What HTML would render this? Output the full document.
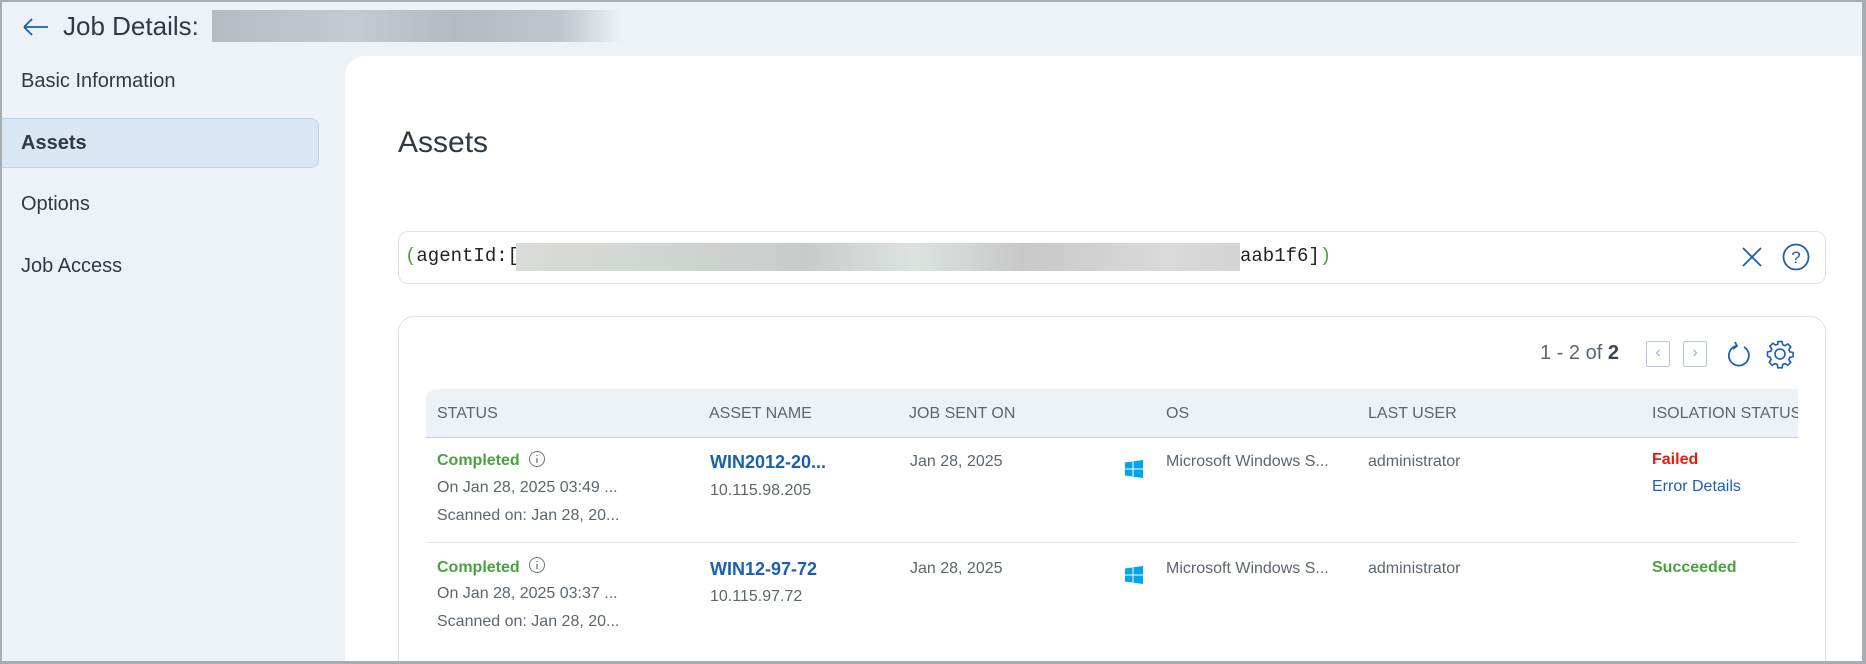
<!DOCTYPE html>
<html style="overflow:hidden;width:1866px;height:664px"><head><meta charset="utf-8"><style>
*{box-sizing:border-box;margin:0;padding:0}
body{width:1866px;height:664px;overflow:hidden;font-family:"Liberation Sans",sans-serif;background:#edf2f9;position:relative;color:#3a4550}
.frame{position:absolute;left:0;top:0;width:1866px;height:664px;border:2px solid #a9acb0;border-right-width:4px;border-bottom-width:3px;pointer-events:none;z-index:10}
.a{position:absolute;white-space:nowrap}
.nav{font-size:20px;color:#2f3a45;left:21px}
.panel{position:absolute;left:345px;top:56px;width:1521px;height:608px;background:#fff;border-top-left-radius:20px}
.th{font-size:16px;color:#5b6670;top:405px}
.g{color:#4aa23e;font-weight:bold;font-size:16px}
.s{font-size:16px;color:#5b6670}
.lnk{color:#1a5fb4;font-weight:bold;font-size:18px}
</style></head><body>
<div class="frame"></div>
<svg class="a" style="left:22px;top:17px" width="28" height="20" viewBox="0 0 28 20"><path d="M2 10H26M2 10L10 2M2 10L10 18" stroke="#1a5fb4" stroke-width="1.8" fill="none"/></svg>
<div class="a" style="left:63px;top:11px;font-size:26px;color:#2f3a45">Job Details:</div>
<div class="a" style="left:212px;top:10px;width:410px;height:32px;background:linear-gradient(90deg,#b5bcc4,#c4cad1 35%,#b3bac2 60%,#c0c6cd 85%,#edf2f9)"></div>
<div class="a nav" style="top:70px">Basic Information</div>
<div class="a" style="left:2px;top:118px;width:317px;height:50px;background:#dae6f3;border:1px solid #bcd2ea;border-left:none;border-radius:0 8px 8px 0"></div>
<div class="a nav" style="top:132px;font-weight:bold">Assets</div>
<div class="a nav" style="top:193px">Options</div>
<div class="a nav" style="top:255px">Job Access</div>
<div class="panel"></div>
<div class="a" style="left:398px;top:126px;font-size:30px;color:#2f3a45">Assets</div>
<div class="a" style="left:398px;top:231px;width:1428px;height:53px;border:1px solid #dde2e8;border-radius:10px"></div>
<div class="a" style="left:405px;top:245px;font-family:'Liberation Mono',monospace;font-size:19px;color:#222"><span style="color:#4aa23e">(</span>agentId:[</div>
<div class="a" style="left:516px;top:243px;width:724px;height:28px;background:linear-gradient(90deg,#d9dcd9,#cfd6d1 20%,#c9cbcb 40%,#dce3df 55%,#c8c8c8 70%,#dadada 90%,#d3d3d3)"></div>
<div class="a" style="left:1240px;top:245px;font-family:'Liberation Mono',monospace;font-size:19px;color:#222">aab1f6]<span style="color:#4aa23e">)</span></div>
<svg class="a" style="left:1740px;top:245px" width="24" height="24"><path d="M3 3L21 21M21 3L3 21" stroke="#1a5fb4" stroke-width="1.8"/></svg>
<svg class="a" style="left:1781px;top:242px" width="30" height="30"><circle cx="15" cy="15" r="12.5" stroke="#1a5fb4" stroke-width="1.8" fill="none"/><text x="15" y="21" text-anchor="middle" font-size="17" fill="#1a5fb4" font-family="Liberation Sans">?</text></svg>
<div class="a" style="left:398px;top:316px;width:1428px;height:360px;border:1px solid #dde2e8;border-radius:16px"></div>
<div class="a" style="left:1540px;top:342px;font-size:20px;color:#5b6670">1 - 2 of <b style="color:#3a4550">2</b></div>
<div class="a" style="left:1646px;top:341px;width:24px;height:26px;border:1.5px solid #b8c8da;border-radius:2px;color:#9ab0c8;font-size:16px;text-align:center;line-height:22px">&lsaquo;</div>
<div class="a" style="left:1683px;top:341px;width:24px;height:26px;border:1.5px solid #b8c8da;border-radius:2px;color:#9ab0c8;font-size:16px;text-align:center;line-height:22px">&rsaquo;</div>
<svg class="a" style="left:1725px;top:340px" width="28" height="30"><path d="M19 7A10 10 0 1 1 11 6" stroke="#1a5fb4" stroke-width="1.8" fill="none"/><path d="M10 2L12 6L8 9" stroke="#1a5fb4" stroke-width="1.8" fill="none"/></svg>
<svg class="a" style="left:1765px;top:339px" width="30" height="30" viewBox="0 0 24 24"><path d="M12 8a4 4 0 1 0 0 8a4 4 0 1 0 0-8z M10.3 2h3.4l.5 2.6 1.8.8 2.2-1.5 2.4 2.4-1.5 2.2.8 1.8 2.6.5v3.4l-2.6.5-.8 1.8 1.5 2.2-2.4 2.4-2.2-1.5-1.8.8-.5 2.6h-3.4l-.5-2.6-1.8-.8-2.2 1.5-2.4-2.4 1.5-2.2-.8-1.8L2 13.7v-3.4l2.6-.5.8-1.8-1.5-2.2 2.4-2.4 2.2 1.5 1.8-.8z" stroke="#1a5fb4" stroke-width="1.3" fill="none"/></svg>
<div class="a" style="left:426px;top:389px;width:1372px;height:49px;background:#edf2f9;border-bottom:1.5px solid #bcd2ea;border-top-left-radius:10px"></div>
<div class="a th" style="left:437px">STATUS</div>
<div class="a th" style="left:709px">ASSET NAME</div>
<div class="a th" style="left:909px">JOB SENT ON</div>
<div class="a th" style="left:1166px">OS</div>
<div class="a th" style="left:1368px">LAST USER</div>
<div class="a th" style="left:1652px;width:146px;overflow:hidden">ISOLATION STATUS</div>
<div class="a" style="left:426px;top:542px;width:1372px;height:1px;background:#e3e7ec"></div>

<div class="a g" style="left:437px;top:452px">Completed</div>
<svg class="a" style="left:528px;top:450px" width="18" height="18"><circle cx="9" cy="9" r="7.5" stroke="#6b7580" stroke-width="1" fill="none"/><path d="M9 8v5M9 5v1" stroke="#6b7580" stroke-width="1.3"/></svg>
<div class="a s" style="left:437px;top:479px">On Jan 28, 2025 03:49 ...</div>
<div class="a s" style="left:437px;top:507px">Scanned on: Jan 28, 20...</div>
<div class="a lnk" style="left:710px;top:452px">WIN2012-20...</div>
<div class="a s" style="left:710px;top:482px">10.115.98.205</div>
<div class="a s" style="left:910px;top:453px">Jan 28, 2025</div>
<svg class="a" style="left:1125px;top:460px" width="18" height="18"><path d="M0 2.5L7.5 1.5V8.5H0zM8.5 1.3L18 0V8.5H8.5zM0 9.5H7.5V16.5L0 15.5zM8.5 9.5H18V18L8.5 16.7z" fill="#00a4ef"/></svg>
<div class="a s" style="left:1166px;top:453px">Microsoft Windows S...</div>
<div class="a s" style="left:1368px;top:453px">administrator</div>
<div class="a" style="left:1652px;top:451px;color:#e0200f;font-weight:bold;font-size:16px">Failed</div>
<div class="a" style="left:1652px;top:478px;color:#1a5fb4;font-size:16px">Error Details</div>

<div class="a g" style="left:437px;top:559px">Completed</div>
<svg class="a" style="left:528px;top:556px" width="18" height="18"><circle cx="9" cy="9" r="7.5" stroke="#6b7580" stroke-width="1" fill="none"/><path d="M9 8v5M9 5v1" stroke="#6b7580" stroke-width="1.3"/></svg>
<div class="a s" style="left:437px;top:585px">On Jan 28, 2025 03:37 ...</div>
<div class="a s" style="left:437px;top:613px">Scanned on: Jan 28, 20...</div>
<div class="a lnk" style="left:710px;top:559px">WIN12-97-72</div>
<div class="a s" style="left:710px;top:588px">10.115.97.72</div>
<div class="a s" style="left:910px;top:560px">Jan 28, 2025</div>
<svg class="a" style="left:1125px;top:566px" width="18" height="18"><path d="M0 2.5L7.5 1.5V8.5H0zM8.5 1.3L18 0V8.5H8.5zM0 9.5H7.5V16.5L0 15.5zM8.5 9.5H18V18L8.5 16.7z" fill="#00a4ef"/></svg>
<div class="a s" style="left:1166px;top:560px">Microsoft Windows S...</div>
<div class="a s" style="left:1368px;top:560px">administrator</div>
<div class="a g" style="left:1652px;top:559px">Succeeded</div>
</body></html>
